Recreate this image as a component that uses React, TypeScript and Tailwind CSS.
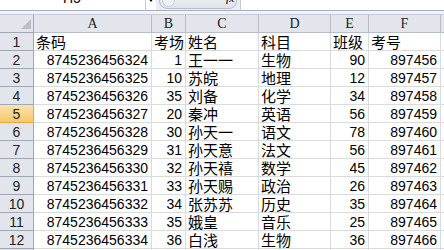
import React from "react";

const rows: string[][] = [
  ["条码", "考场", "姓名", "科目", "班级", "考号"],
  ["8745236456324", "1", "王一一", "生物", "90", "897456"],
  ["8745236456325", "10", "苏皖", "地理", "12", "897457"],
  ["8745236456326", "35", "刘备", "化学", "34", "897458"],
  ["8745236456327", "20", "秦冲", "英语", "56", "897459"],
  ["8745236456328", "30", "孙天一", "语文", "78", "897460"],
  ["8745236456329", "31", "孙天意", "法文", "56", "897461"],
  ["8745236456330", "32", "孙天禧", "数学", "45", "897462"],
  ["8745236456331", "33", "孙天赐", "政治", "26", "897463"],
  ["8745236456332", "34", "张苏苏", "历史", "35", "897464"],
  ["8745236456333", "35", "娥皇", "音乐", "25", "897465"],
  ["8745236456334", "36", "白浅", "生物", "36", "897466"],
  ["", "", "", "", "", ""],
];

const cols = ["A", "B", "C", "D", "E", "F", ""];

const isNum = (s: string) => /^\d+$/.test(s);

export default function App() {
  return (
    <div className="w-[444px] h-[250px] overflow-hidden bg-white text-black">
      {/* formula bar strip */}
      <div className="h-[10px] flex bg-[#e9eef4]">
        <div className="w-[146px] h-full bg-white relative overflow-hidden border-r border-[#c5ccd6]">
          <span className="absolute left-[63px] top-[-9px] text-[14px] leading-[14px] font-['Liberation_Sans',sans-serif]">H5</span>
        </div>
        <div className="w-[10px] h-full bg-white relative overflow-hidden">
          <span className="absolute left-[2px] top-[-2px] w-0 h-0 border-l-[3px] border-r-[3px] border-t-[4px] border-l-transparent border-r-transparent border-t-black"></span>
        </div>
        <div className="w-[3px]"></div>
        <div className="w-[78px] h-full relative overflow-hidden">
          <div className="absolute left-0 top-[-8px] w-[78px] h-[17px] rounded-[8px] border border-[#b6bfca] bg-gradient-to-b from-[#f6f8fb] to-[#dde3ea]">
            <div className="absolute left-[2px] top-[1px] w-[13px] h-[13px] rounded-full border border-[#c9d0d8] bg-[#eef1f5]"></div>
            <span className="absolute left-[66px] top-[0px] text-[10px] leading-[12px] italic font-bold font-['Liberation_Serif',serif] text-[#333]">fx</span>
          </div>
        </div>
        <div className="w-[3px]"></div>
        <div className="flex-1 h-full bg-white border-l border-[#c5ccd6]"></div>
      </div>
      <div className="h-[1px] bg-[#a7b1bd]"></div>
      <div className="h-[3px] bg-[#f0f3f7]"></div>
      <div className="h-[1px] bg-[#c4cad3]"></div>

      {/* sheet grid */}
      <div className="grid grid-cols-[34px_118px_34px_73px_72px_38px_72px_20px]">
        {/* header row */}
        <div className="h-[18px] bg-[#e2e6ec] border-r border-b border-[#9ea7b3] relative">
          <div className="absolute right-[2px] bottom-[3px] w-0 h-0 border-l-[10px] border-t-[10px] border-l-transparent border-t-transparent border-b-0 border-r-[0px]"
            style={{ borderBottom: "10px solid #b9c0c9", borderLeft: "10px solid transparent" }}></div>
        </div>
        {cols.map((c, i) => (
          <div
            key={"h" + i}
            className="h-[18px] bg-[#e2e6ec] border-r border-b border-[#b7bec8] flex items-center justify-center text-[14px] leading-[17px] font-['Liberation_Serif',serif] text-[#222]"
          >
            {c}
          </div>
        ))}
        {rows.map((r, ri) => (
          <React.Fragment key={ri}>
            <div
              className={
                ri === 4
                  ? "h-[18px] bg-gradient-to-b from-[#fbe2ac] to-[#f4c96c] border-r border-b border-[#f0a63c] flex items-center justify-center text-[14px] leading-[17px] font-['Liberation_Sans',sans-serif] text-[#222] overflow-hidden"
                  : "h-[18px] bg-[#e2e6ec] border-r border-b border-[#9ea7b3] flex items-center justify-center text-[14px] leading-[17px] font-['Liberation_Sans',sans-serif] text-[#222] overflow-hidden"
              }
            >
              <span className="pt-[1px]">{ri + 1}</span>
            </div>
            {[...r, ""].map((v, ci) => (
              <div
                key={ci}
                className={
                  isNum(v)
                    ? "h-[18px] border-r border-b border-[#d9dbde] flex items-center justify-end pr-[3px] text-[14px] leading-[17px] font-['Liberation_Sans',sans-serif] overflow-hidden whitespace-nowrap"
                    : "h-[18px] border-r border-b border-[#d9dbde] flex items-center justify-start pl-[2px] text-[15px] leading-[17px] font-['Noto_Sans_CJK_SC',sans-serif] overflow-visible whitespace-nowrap"
                }
              >
                <span className={isNum(v) ? "pt-[2px]" : ""}>{v}</span>
              </div>
            ))}
          </React.Fragment>
        ))}
      </div>
    </div>
  );
}
